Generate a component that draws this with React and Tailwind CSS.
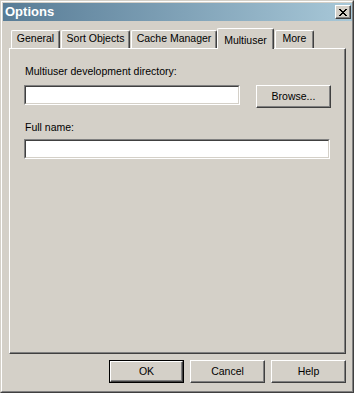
import React from "react";

const font = { fontFamily: '"Liberation Sans", Arial, sans-serif' };

function CloseGlyph() {
  const rows = ["11000011", "01100110", "00111100", "00011000", "00111100", "01100110", "11000011"];
  const rects = [];
  rows.forEach((r, y) =>
    r.split("").forEach((c, x) => {
      if (c === "1") rects.push(<rect key={`${x}-${y}`} x={x} y={y} width="1" height="1" fill="#000" />);
    })
  );
  return (
    <svg width="8" height="7" viewBox="0 0 8 7" shapeRendering="crispEdges">
      {rects}
    </svg>
  );
}

function Tab({ label, w, selected }) {
  if (selected) {
    return (
      <div
        className={`relative z-10 -mb-[1px] h-[21px] ${w} bg-[#d4d0c8] border-l border-t border-r border-l-white border-t-white border-r-[#404040] rounded-tl-[2px] rounded-tr-[2px] shadow-[inset_-1px_0_#808080] flex justify-center pt-[5px] text-[10.5px] leading-[13px] text-black`}
      >
        {label}
      </div>
    );
  }
  return (
    <div
      className={`h-[18px] ${w} bg-[#d4d0c8] border-l border-t border-r border-l-white border-t-white border-r-[#404040] rounded-tl-[2px] rounded-tr-[2px] shadow-[inset_-1px_0_#808080] flex justify-center pt-[1px] text-[10.5px] leading-[13px] text-black`}
    >
      {label}
    </div>
  );
}

function Button({ children, def }) {
  if (def) {
    return (
      <div className="w-[75px] h-[23px] border border-black">
        <div className="w-full h-full border border-t-white border-l-white border-r-[#404040] border-b-[#404040] shadow-[inset_-1px_-1px_#808080] flex items-center justify-center text-[10.5px] text-black">
          {children}
        </div>
      </div>
    );
  }
  return (
    <div className="w-[75px] h-[23px] border border-t-white border-l-white border-r-[#404040] border-b-[#404040] shadow-[inset_-1px_-1px_#808080] flex items-center justify-center text-[10.5px] text-black">
      {children}
    </div>
  );
}

function Field({ w }) {
  return (
    <div className={`${w} h-[20px] bg-white border border-t-[#808080] border-l-[#808080] border-r-white border-b-white`}>
      <div className="w-full h-full border border-t-[#404040] border-l-[#404040] border-r-[#d4d0c8] border-b-[#d4d0c8]" />
    </div>
  );
}

export default function App() {
  return (
    <div style={font} className="w-[354px] h-[393px] bg-[#d4d0c8] border border-t-[#d4d0c8] border-l-[#d4d0c8] border-r-[#404040] border-b-[#404040]">
      <div className="w-full h-full border border-t-white border-l-white border-r-[#808080] border-b-[#808080] pl-[1px] pt-[1px] flex flex-col">
        {/* title bar */}
        <div className="h-[18px] bg-gradient-to-r from-[#587c96] to-[#a8c8d8] flex items-center justify-between pl-[2px] pr-[1px]">
          <span className="text-white font-bold text-[13px] leading-[16px]">Options</span>
          <div className="w-[16px] h-[14px] bg-[#d4d0c8] border border-t-white border-l-white border-r-[#404040] border-b-[#404040] shadow-[inset_-1px_-1px_#808080] flex items-center justify-center">
            <CloseGlyph />
          </div>
        </div>

        <div className="pl-[6px] mt-[7px] flex flex-col">
          {/* tab row */}
          <div className="h-[20px] flex items-end pl-[2px]">
            <Tab label="General" w="w-[49px]" />
            <div className="w-[1px]" />
            <Tab label="Sort Objects" w="w-[69px]" />
            <div className="w-[1px]" />
            <Tab label="Cache Manager" w="w-[86px]" />
            <Tab label="Multiuser" w="w-[57px]" selected />
            <div className="w-[1px]" />
            <Tab label="More" w="w-[39px]" />
          </div>

          {/* panel */}
          <div className="w-[337px] h-[306px] border border-t-white border-l-white border-r-[#404040] border-b-[#404040] shadow-[inset_-1px_-1px_#808080] pt-[16px] pl-[14px] text-[10.5px] leading-[13px] text-black">
            <div className="pl-[1px]">Multiuser development directory:</div>
            <div className="mt-[7px] flex items-start">
              <Field w="w-[216px]" />
              <div className="ml-[16px]">
                <Button>Browse...</Button>
              </div>
            </div>
            <div className="mt-[13px] pl-[1px]">Full name:</div>
            <div className="mt-[5px]">
              <Field w="w-[306px]" />
            </div>
          </div>

          {/* buttons */}
          <div className="w-[337px] mt-[6px] flex justify-end gap-[6px]">
            <Button def>OK</Button>
            <Button>Cancel</Button>
            <Button>Help</Button>
          </div>
        </div>
      </div>
    </div>
  );
}
